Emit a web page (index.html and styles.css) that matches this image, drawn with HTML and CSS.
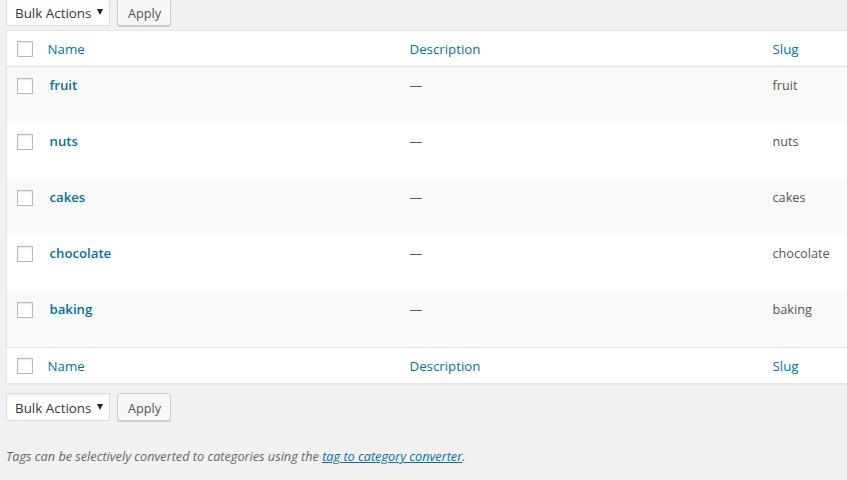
FILE: index.html
```html
<!DOCTYPE html>
<html lang="en">
<head>
    <meta charset="utf-8">
    <title>Tags</title>
    <link rel="stylesheet" href="styles.css">
</head>
<body>
    <div class="wrap">
        <div class="tablenav top">
            <div class="bulk-select">Bulk Actions <span class="caret"></span></div>
            <button type="button" class="button">Apply</button>
        </div>

        <table class="widefat">
            <colgroup>
                <col class="col-cb">
                <col class="col-name">
                <col class="col-desc">
                <col class="col-slug">
                <col class="col-count">
            </colgroup>
            <thead>
                <tr>
                    <td class="check-column"><span class="cb"></span></td>
                    <th><a href="#">Name</a></th>
                    <th><a href="#">Description</a></th>
                    <th><a href="#">Slug</a></th>
                    <th></th>
                </tr>
            </thead>
            <tbody>
                <tr class="alt">
                    <th class="check-column"><span class="cb"></span></th>
                    <td><a class="row-title" href="#">fruit</a></td>
                    <td>—</td>
                    <td>fruit</td>
                    <td></td>
                </tr>
                <tr>
                    <th class="check-column"><span class="cb"></span></th>
                    <td><a class="row-title" href="#">nuts</a></td>
                    <td>—</td>
                    <td>nuts</td>
                    <td></td>
                </tr>
                <tr class="alt">
                    <th class="check-column"><span class="cb"></span></th>
                    <td><a class="row-title" href="#">cakes</a></td>
                    <td>—</td>
                    <td>cakes</td>
                    <td></td>
                </tr>
                <tr>
                    <th class="check-column"><span class="cb"></span></th>
                    <td><a class="row-title" href="#">chocolate</a></td>
                    <td>—</td>
                    <td>chocolate</td>
                    <td></td>
                </tr>
                <tr class="alt">
                    <th class="check-column"><span class="cb"></span></th>
                    <td><a class="row-title" href="#">baking</a></td>
                    <td>—</td>
                    <td>baking</td>
                    <td></td>
                </tr>
            </tbody>
            <tfoot>
                <tr>
                    <td class="check-column"><span class="cb"></span></td>
                    <th><a href="#">Name</a></th>
                    <th><a href="#">Description</a></th>
                    <th><a href="#">Slug</a></th>
                    <th></th>
                </tr>
            </tfoot>
        </table>

        <div class="tablenav bottom">
            <div class="bulk-select">Bulk Actions <span class="caret"></span></div>
            <button type="button" class="button">Apply</button>
        </div>

        <p class="description">Tags can be selectively converted to categories using the <a href="#">tag to category converter</a>.</p>
    </div>
</body>
</html>
```

FILE: styles.css
```css
html, body {
    margin: 0;
    padding: 0;
    background: #f1f1f1;
    overflow: hidden;
}
body, button {
    font-family: "Open Sans", "Noto Sans", sans-serif;
    font-size: 12.7px;
    color: #444;
}
.wrap {
    padding-left: 6px;
}
.tablenav {
    display: flex;
    gap: 7px;
    height: 28px;
}
.tablenav.top {
    margin-top: -2px;
    margin-bottom: 4px;
}
.tablenav.bottom {
    margin-top: 9px;
}
.bulk-select {
    box-sizing: border-box;
    width: 104px;
    height: 28px;
    padding: 1px 6px 0 8px;
    display: flex;
    align-items: center;
    justify-content: space-between;
    background: #fff;
    border: 1px solid #ddd;
    box-shadow: inset 0 1px 2px rgba(0,0,0,.07);
    font-size: 13.4px;
    color: #32373c;
}
.caret {
    width: 0;
    height: 0;
    border-left: 3.5px solid transparent;
    border-right: 3.5px solid transparent;
    border-top: 6px solid #222;
    margin-bottom: 2px;
}
.button {
    box-sizing: border-box;
    height: 28px;
    width: 54px;
    padding: 1px 10px 0;
    background: #f7f7f7;
    border: 1px solid #ccc;
    border-radius: 3px;
    box-shadow: 0 1px 0 #ccc;
    color: #555;
}
.widefat {
    width: 1100px;
    table-layout: fixed;
    border-collapse: collapse;
    border: 1px solid #e5e5e5;
    background: #fff;
    box-shadow: 0 1px 1px rgba(0,0,0,.04);
}
.col-cb { width: 31px; }
.col-name { width: 362px; }
.col-desc { width: 363px; }
.col-slug { width: 130px; }
.widefat th, .widefat td {
    text-align: left;
    vertical-align: top;
    font-weight: normal;
    line-height: 19px;
}
.widefat thead th, .widefat tfoot th {
    height: 19px;
    padding: 9px 10px 7px;
    font-size: 13.3px;
}
.widefat thead tr {
    border-bottom: 1px solid #e1e1e1;
}
.widefat tfoot tr {
    border-top: 1px solid #e1e1e1;
}
.widefat a {
    color: #0073aa;
    text-decoration: none;
}
.widefat tbody td {
    height: 39px;
    padding: 9px 10px 8px;
    color: #555;
}
.widefat tbody tr.alt {
    background: #f9f9f9;
}
.check-column {
    padding: 10px 0 0 10px;
    height: 25px;
}
.widefat tbody .check-column {
    padding: 11px 0 0 10px;
    height: 45px;
}
.cb {
    display: block;
    box-sizing: border-box;
    width: 16px;
    height: 16px;
    background: #fff;
    border: 1px solid #b4b9be;
    box-shadow: inset 0 1px 2px rgba(0,0,0,.1);
}
.widefat .row-title {
    font-size: 13.2px;
    font-weight: 600;
    margin-left: 2px;
}
.description {
    margin: 26px 0 0;
    font-style: italic;
    color: #666;
}
.description a {
    color: #0073aa;
}
```
